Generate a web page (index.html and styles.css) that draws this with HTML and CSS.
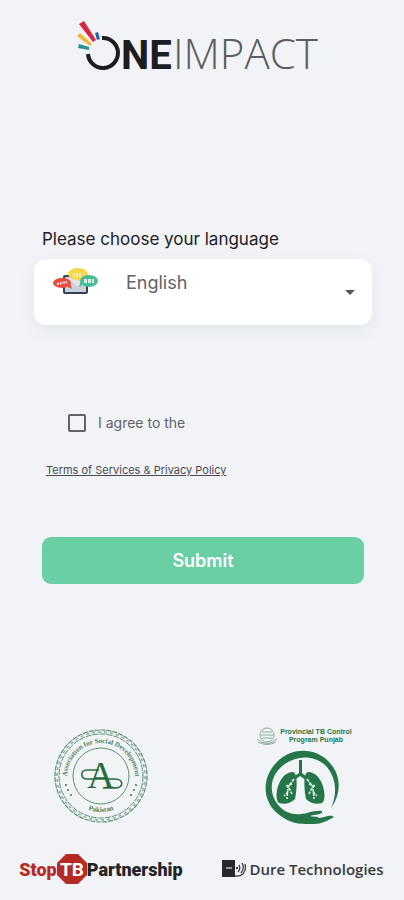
FILE: index.html
```html
<!DOCTYPE html>
<html lang="en">
<head>
  <meta charset="UTF-8">
  <meta name="viewport" content="width=device-width, initial-scale=1.0">
  <title>OneImpact</title>
  <link rel="stylesheet" href="styles.css">
</head>
<body>
  <div class="page">
    <header class="header">
      <svg class="logo" viewBox="0 0 244 54" role="img" aria-label="OneImpact">
        <path d="M1 4 L6 1 L18 20 L15 22 Z" fill="#d7263d"/>
        <path d="M-1 16 L2 13 L14 24 L12 26 Z" fill="#f2b632"/>
        <path d="M1 24 L11 27 L11 30 L0 28 Z" fill="#2a9187"/>
        <path d="M17 13 L20 12 L22 19 L19 20 Z" fill="#2b63a8"/>
        <path d="M24 18 A15 15 0 1 1 10 34" fill="none" stroke="#1c1d20" stroke-width="4"/>
        <text class="logo-bold" x="43" y="49">NE</text>
        <text class="logo-thin" x="95" y="49">IMPACT</text>
      </svg>
    </header>

    <form class="form">
      <label class="language-label" for="language">Please choose your language</label>
      <div class="language-box">
        <svg class="language-icon" viewBox="0 0 46 26" aria-hidden="true">
          <rect x="11" y="8" width="23" height="17" rx="1" fill="#c9d0da" stroke="#3b3f55" stroke-width="2"/>
          <path d="M15 10 h17 v8 h-9 z" fill="#dfe3e8"/>
          <ellipse cx="25" cy="6" rx="10" ry="6" fill="#f7d747"/>
          <path d="M24 11 l5 5 l2 -7 z" fill="#f7d747"/>
          <ellipse cx="9" cy="15" rx="9" ry="5" fill="#ea4d40"/>
          <path d="M13 18 l6 3 l-2 -6 z" fill="#ea4d40"/>
          <ellipse cx="36" cy="13" rx="9" ry="6" fill="#45bd98"/>
          <path d="M31 16 l-5 3 l2 -6 z" fill="#45bd98"/>
          <path d="M20 6 h10 M20 8 h9" stroke="#fff6c8" stroke-width="1.4" stroke-dasharray="2 1"/>
          <path d="M4 16 l10 -2" stroke="#fff" stroke-width="2" stroke-dasharray="2 1"/>
          <path d="M31 12 h10 M31 14 h10" stroke="#fff" stroke-width="1.3" stroke-dasharray="3 1"/>
        </svg>
        <select class="language-select" id="language">
          <option>English</option>
        </select>
        <svg class="arrow" viewBox="0 0 10 5" aria-hidden="true"><path d="M0 0 H10 L5 5 Z" fill="#55575b"/></svg>
      </div>

      <div class="agree">
        <input type="checkbox" id="agree">
        <label for="agree">I agree to the</label>
      </div>
      <a class="terms" href="#">Terms of Services &amp; Privacy Policy</a>

      <button class="submit" type="submit">Submit</button>
    </form>

    <footer class="partners">
      <svg class="seal" viewBox="0 0 96 96" role="img" aria-label="Association for Social Development Pakistan">
        <defs>
          <path id="seal-top" d="M17 63 A34 34 0 1 1 79 63"/>
          <path id="seal-bottom" d="M12 48 A36 36 0 0 0 84 48"/>
        </defs>
        <g fill="none" stroke="#5d8f70">
          <circle cx="48" cy="48" r="46" stroke-width="1.2" stroke-dasharray="5 1"/>
          <circle cx="48" cy="48" r="44" stroke-width="1.6" stroke-dasharray="3 3" stroke="#8fb39c"/>
          <circle cx="48" cy="48" r="42" stroke-width="1" stroke-dasharray="6 1"/>
          <circle cx="48" cy="48" r="28" stroke-width="1"/>
        </g>
        <text class="seal-text"><textPath href="#seal-top" startOffset="50%" text-anchor="middle">Association for Social Development</textPath></text>
        <text class="seal-text"><textPath href="#seal-bottom" startOffset="50%" text-anchor="middle">Pakistan</textPath></text>
        <g fill="#3b7551">
          <circle cx="13" cy="57" r="1"/><circle cx="15" cy="62" r="1"/><circle cx="18" cy="67" r="1"/>
          <circle cx="83" cy="57" r="1"/><circle cx="81" cy="62" r="1"/><circle cx="78" cy="67" r="1"/>
        </g>
        <path d="M46 42 H34 C27 42 27 51 34 51 H62 C71 51 71 60 62 60 H50" fill="none" stroke="#276a40" stroke-width="1.6"/>
        <text class="seal-letter" x="48" y="60" text-anchor="middle">A</text>
      </svg>

      <svg class="lungs" viewBox="0 0 96 100" role="img" aria-label="Provincial TB Control Program Punjab">
        <g fill="none" stroke="#8fab9a">
          <ellipse cx="12" cy="9" rx="7" ry="7"/>
          <path d="M2 13 q10 9 20 0 M3 16 q9 5 18 0 M7 6 h10 M6 9 h12 M7 12 h10"/>
        </g>
        <text class="caption" x="61" y="8" text-anchor="middle">Provincial TB Control</text>
        <text class="caption" x="61" y="16" text-anchor="middle">Program Punjab</text>
        <path d="M76 82 C87 67 86 48 74 36 C61 22 39 21 24 34 C7 49 6 73 22 87 C31 95 40 98 51 98 L60 98 C66 98 72 95 79 91 C76 88 70 91 64 92 C63 90 58 91 55 90 C60 88 68 89 67 85 C58 84 52 88 46 88 C37 89 30 86 25 81 C14 70 14 53 25 42 C38 29 58 28 70 39 C81 50 83 67 76 82 Z" fill="#26764a"/>
        <path d="M44 34 h3 v13 l6 5 l-1 3 l-7 -5 l-7 5 l-1 -3 l7 -5 z" fill="#26764a"/>
        <path d="M38 46 C43 47 42 63 40 73 C36 77 30 79 24 77 C18 73 23 46 38 46 Z" fill="#26764a"/>
        <path d="M53 46 C48 47 49 63 51 73 C55 77 61 79 67 77 C73 73 68 46 53 46 Z" fill="#26764a"/>
        <path d="M39 53 L33 61 L32 73 M37 58 l-6 2 M34 62 l3 6 M33 66 l-4 4 M52 53 L58 61 L59 73 M54 58 l6 2 M57 62 l-3 6 M58 66 l4 4" fill="none" stroke="#e2eee6" stroke-width="1.6" stroke-dasharray="3 1"/>
      </svg>

      <div class="stop-tb">
        <span class="stop">Stop</span>
        <svg class="octagon" viewBox="0 0 30 30">
          <path d="M9 0 H21 L30 9 V21 L21 30 H9 L0 21 V9 Z" fill="#b52a22"/>
          <text class="octagon-text" x="15" y="22" text-anchor="middle">TB</text>
        </svg>
        <span>Partnership</span>
      </div>

      <div class="dure">
        <svg class="dure-icon" viewBox="0 0 25 20" aria-hidden="true">
          <rect x="0" y="1" width="13" height="17" fill="#28292c"/>
          <path d="M4 9 h6" stroke="#bbb" stroke-width="1.5"/>
          <path d="M13 17 C19 18 25 14 23 5 M20 4 q3 5 -1 10 M17 6 q2 4 -1 7" fill="none" stroke="#3a3b3e" stroke-width="1.3"/>
          <circle cx="15" cy="9" r="1.2" fill="#3a3b3e"/>
        </svg>
        <span>Dure Technologies</span>
      </div>
    </footer>
  </div>
</body>
</html>
```

FILE: styles.css
```css
* {
  margin: 0;
  padding: 0;
  box-sizing: border-box;
}
body {
  font-family: Inter, "Liberation Sans", sans-serif;
  background-color: #f1f3f7;
  color: #202125;
}
.page {
  display: flex;
  flex-direction: column;
  min-height: 100vh;
  padding: 20px 0 16px;
}
.header {
  text-align: center;
}
.logo {
  width: 244px;
  height: 54px;
  margin-right: 4px;
  overflow: visible;
}
.logo-bold {
  font: 700 40px Roboto, sans-serif;
  fill: #1c1d20;
}
.logo-thin {
  font: 300 42px "Open Sans", sans-serif;
  fill: #5c5d60;
}
.form {
  display: flex;
  flex-direction: column;
  padding: 0 32px 0 34px;
  margin-top: 149px;
}
.language-label {
  padding-left: 8px;
  font-size: 17px;
  line-height: 24px;
}
.language-box {
  position: relative;
  margin-top: 8px;
}
.language-select {
  width: 100%;
  height: 66px;
  padding: 0 48px 20px 92px;
  border: none;
  border-radius: 12px;
  background-color: #fff;
  box-shadow: 0 6px 16px rgba(120, 140, 150, 0.1);
  appearance: none;
  font-family: inherit;
  font-size: 18px;
  color: #606268;
}
.language-icon {
  position: absolute;
  top: 9px;
  left: 19px;
  width: 46px;
  height: 26px;
}
.arrow {
  position: absolute;
  top: 31px;
  right: 17px;
  width: 10px;
  height: 5px;
}
.agree {
  display: flex;
  align-items: center;
  gap: 12px;
  margin-top: 88px;
  padding-left: 34px;
  font-size: 14px;
  line-height: 20px;
  color: #606268;
}
.agree input {
  width: 18px;
  height: 18px;
  appearance: none;
  border: 2px solid #606268;
  border-radius: 2px;
}
.agree input:checked {
  background-color: #6acfa4;
}
.terms {
  align-self: flex-start;
  margin: 29px 0 0 12px;
  font-size: 11px;
  line-height: 16px;
  color: #4a4b50;
}
.submit {
  height: 47px;
  margin: 59px 8px 0;
  border: none;
  border-radius: 9px;
  background-color: #6acfa4;
  color: #fff;
  font-family: inherit;
  font-size: 18px;
  font-weight: 600;
  cursor: pointer;
}
.partners {
  display: grid;
  grid-template-columns: 1fr 1fr;
  row-gap: 28px;
  justify-items: center;
  align-items: center;
  margin-top: auto;
}
.seal {
  width: 96px;
  height: 96px;
}
.seal-text {
  font: 700 7px "Liberation Serif", serif;
  fill: #4a8260;
}
.seal-letter {
  font: 400 38px "Liberation Serif", serif;
  fill: #276a40;
}
.lungs {
  width: 96px;
  height: 100px;
  overflow: visible;
}
.caption {
  font: 700 7px "Liberation Sans Narrow", "Liberation Sans", sans-serif;
  fill: #26764a;
}
.stop-tb,
.dure {
  display: flex;
  align-items: center;
  white-space: nowrap;
}
.stop-tb {
  font-family: Roboto, sans-serif;
  font-size: 18px;
  font-weight: 900;
  color: #242427;
}
.stop {
  color: #b52a22;
}
.octagon {
  width: 30px;
  height: 30px;
}
.octagon-text {
  font: 700 19px Roboto, sans-serif;
  fill: #fff;
}
.dure {
  gap: 2px;
  font-family: "Open Sans", sans-serif;
  font-size: 15px;
  font-weight: 600;
  color: #3a3b3e;
}
.dure-icon {
  width: 25px;
  height: 20px;
}
```
